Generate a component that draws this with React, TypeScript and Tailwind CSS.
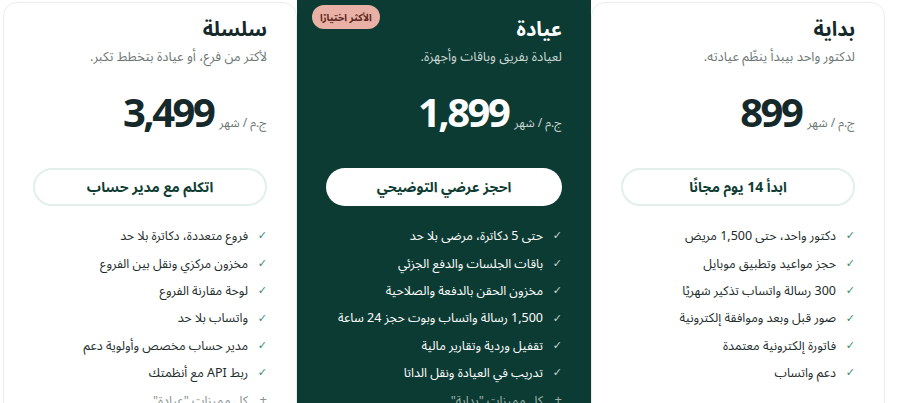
import React from "react";

type Plan = {
  name: string;
  desc: string;
  price: string;
  cta: string;
  features: string[];
  extra?: string;
  featured?: boolean;
};

const plans: Plan[] = [
  {
    name: "بداية",
    desc: "لدكتور واحد بيبدأ ينظّم عيادته.",
    price: "899",
    cta: "ابدأ 14 يوم مجانًا",
    features: [
      "دكتور واحد، حتى 1,500 مريض",
      "حجز مواعيد وتطبيق موبايل",
      "300 رسالة واتساب تذكير شهريًا",
      "صور قبل وبعد وموافقة إلكترونية",
      "فاتورة إلكترونية معتمدة",
      "دعم واتساب",
    ],
  },
  {
    name: "عيادة",
    desc: "لعيادة بفريق وباقات وأجهزة.",
    price: "1,899",
    cta: "احجز عرضي التوضيحي",
    featured: true,
    features: [
      "حتى 5 دكاترة، مرضى بلا حد",
      "باقات الجلسات والدفع الجزئي",
      "مخزون الحقن بالدفعة والصلاحية",
      "1,500 رسالة واتساب وبوت حجز 24 ساعة",
      "تقفيل وردية وتقارير مالية",
      "تدريب في العيادة ونقل الداتا",
    ],
    extra: "كل مميزات \"بداية\"",
  },
  {
    name: "سلسلة",
    desc: "لأكتر من فرع، أو عيادة بتخطط تكبر.",
    price: "3,499",
    cta: "اتكلم مع مدير حساب",
    features: [
      "فروع متعددة، دكاترة بلا حد",
      "مخزون مركزي ونقل بين الفروع",
      "لوحة مقارنة الفروع",
      "واتساب بلا حد",
      "مدير حساب مخصص وأولوية دعم",
      "ربط API مع أنظمتك",
    ],
    extra: "كل مميزات \"عيادة\"",
  },
];

function Card({ p }: { p: Plan }) {
  const f = !!p.featured;
  return (
    <div
      className={
        f
          ? "relative -mt-[20px] min-h-[460px] bg-[#0c3b33] px-[29px] pt-[36px]"
          : "relative min-h-[440px] rounded-[14px] border border-[#e9edeb] bg-white px-[29px] pt-[15px]"
      }
    >
      {f && (
        <div className="absolute left-[15px] top-[23px] flex h-[24px] items-center rounded-full bg-[#e9b1a5] px-[8px] text-[10px] font-bold text-[#5b2620]">
          الأكثر اختيارًا
        </div>
      )}
      <div className={"text-[20px] font-bold leading-[24px] " + (f ? "text-white" : "text-[#15292a]")}>
        {p.name}
      </div>
      <div className={"mt-[5px] text-[13px] leading-[20px] " + (f ? "text-[#c9d6d2]" : "text-[#6d7875]")}>
        {p.desc}
      </div>
      <div className="mt-[28px] flex items-baseline gap-[6px]">
        <span className={"text-[12px] " + (f ? "text-[#c9d6d2]" : "text-[#6d7875]")}>ج.م / شهر</span>
        <span
          dir="ltr"
          className={
            "text-[40px] font-bold leading-[40px] tracking-[-2.5px] " + (f ? "text-white" : "text-[#15292a]")
          }
        >
          {p.price}
        </span>
      </div>
      <button
        className={
          "mt-[33px] flex h-[38px] w-full items-center justify-center rounded-full text-[14px] font-bold text-[#0f3d33] " +
          (f ? "bg-white" : "border-2 border-[#e1f0eb] bg-white")
        }
      >
        {p.cta}
      </button>
      <ul className="mt-[17px] flex flex-col">
        {p.features.map((t) => (
          <li key={t} className="flex h-[27.4px] items-center gap-[10px] whitespace-nowrap text-[12.5px]">
            <span className={"w-[9px] text-[11px] " + (f ? "text-[#c6d4cf]" : "text-[#3b8c6c]")}>✓</span>
            <span className={f ? "text-white" : "text-[#1d2b2b]"}>{t}</span>
          </li>
        ))}
        {p.extra && (
          <li className="flex h-[27.4px] items-center gap-[10px] whitespace-nowrap text-[12.5px]">
            <span className={"w-[9px] text-[13px] " + (f ? "text-[#9fb3ad]" : "text-[#8a9491]")}>+</span>
            <span className={f ? "text-[#9fb3ad]" : "text-[#8a9491]"}>{p.extra}</span>
          </li>
        )}
      </ul>
    </div>
  );
}

export default function App() {
  return (
    <div
      dir="rtl"
      className="h-[403px] w-[900px] overflow-hidden bg-white"
      style={{ fontFamily: '"Noto Sans Arabic", "Noto Sans", "DejaVu Sans", sans-serif' }}
    >
      <div className="grid grid-cols-3 items-start pl-[3px] pr-[15px] pt-[2px]">
        {plans.map((p) => (
          <Card key={p.name} p={p} />
        ))}
      </div>
    </div>
  );
}
